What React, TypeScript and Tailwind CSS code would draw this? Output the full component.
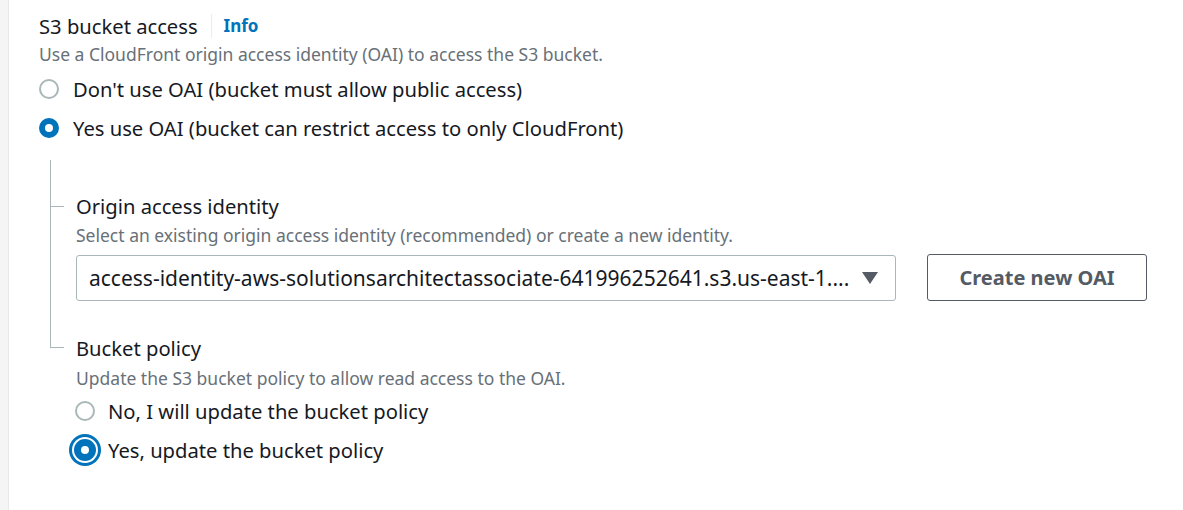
import React from "react";

const font = { fontFamily: '"Noto Sans", "Open Sans", Arial, sans-serif' };

function Radio({ checked, focused }: { checked?: boolean; focused?: boolean }) {
  if (focused) {
    return (
      <span className="flex h-[22px] w-[22px] shrink-0 items-center justify-center rounded-full border-[7px] border-[#0073bb] bg-white ring-[3px] ring-[#0073bb] ring-offset-2 ring-offset-white" />
    );
  }
  if (checked) {
    return <span className="block h-[20px] w-[20px] shrink-0 rounded-full border-[6px] border-[#0073bb] bg-white" />;
  }
  return <span className="block h-[20px] w-[20px] shrink-0 rounded-full border-2 border-[#aab7b8] bg-white" />;
}

export default function App() {
  return (
    <div className="flex h-[510px] w-[1183px] bg-white text-[#16191f]" style={font}>
      <div className="w-[9px] shrink-0 border-r border-[#e6e8ea] bg-[#f5f5f5]" />
      <div className="flex-1 pl-[30px] pt-[12px]">
        <div className="flex h-[28px] items-center">
          <span className="text-[20.2px] leading-[28px]">S3 bucket access</span>
          <span className="ml-[13px] h-[24px] w-px bg-[#eaeded]" />
          <span className="ml-[12px] text-[17px] font-bold leading-[28px] text-[#0073bb]">Info</span>
        </div>
        <div className="mt-[4px] text-[17.5px] leading-[20px] text-[#687078]">
          Use a CloudFront origin access identity (OAI) to access the S3 bucket.
        </div>
        <div className="mt-[11px] flex h-[28px] items-center gap-[14px]">
          <Radio />
          <span className="text-[20.2px] leading-[28px]">Don't use OAI (bucket must allow public access)</span>
        </div>
        <div className="mt-[11px] flex h-[28px] items-center gap-[14px]">
          <Radio checked />
          <span className="text-[20.2px] leading-[28px]">Yes use OAI (bucket can restrict access to only CloudFront)</span>
        </div>

        <div className="ml-[11px] mt-[18px] flex flex-col">
          <div className="flex">
            <div className="w-[26px] shrink-0 border-l border-[#aab7b8]">
              <div className="mt-[46px] h-px w-[13px] bg-[#aab7b8]" />
            </div>
            <div className="flex-1 pb-[33px] pt-[32px]">
              <div className="text-[20.2px] leading-[28px]">Origin access identity</div>
              <div className="mt-[5px] text-[17.5px] leading-[20px] text-[#687078]">
                Select an existing origin access identity (recommended) or create a new identity.
              </div>
              <div className="mt-[9px] flex items-center gap-[31px]">
                <div className="flex h-[46px] w-[820px] items-center justify-between rounded-[3px] border border-[#aab7b8] pl-[12px] pr-[17px]">
                  <span className="truncate text-[21px] leading-[28px]">
                    access-identity-aws-solutionsarchitectassociate-641996252641.s3.us-east-1....
                  </span>
                  <svg width="16" height="12" viewBox="0 0 16 12" className="ml-3 shrink-0">
                    <polygon points="0,0 16,0 8,12" fill="#545b64" />
                  </svg>
                </div>
                <button className="flex h-[47px] w-[220px] items-center justify-center rounded-[3px] border border-[#545b64] bg-white text-[20px] font-bold text-[#545b64]">
                  Create new OAI
                </button>
              </div>
            </div>
          </div>
          <div className="flex">
            <div className="w-[26px] shrink-0">
              <div className="h-[14px] w-[14px] border-b border-l border-[#aab7b8]" />
            </div>
            <div className="flex-1">
              <div className="text-[20.2px] leading-[28px]">Bucket policy</div>
              <div className="mt-[6px] text-[17.5px] leading-[20px] text-[#687078]">
                Update the S3 bucket policy to allow read access to the OAI.
              </div>
              <div className="-ml-px mt-[9px] flex h-[28px] items-center gap-[13px]">
                <Radio />
                <span className="text-[20.2px] leading-[28px]">No, I will update the bucket policy</span>
              </div>
              <div className="-ml-[2px] mt-[11px] flex h-[28px] items-center gap-[12px]">
                <Radio focused />
                <span className="text-[20.2px] leading-[28px]">Yes, update the bucket policy</span>
              </div>
            </div>
          </div>
        </div>
      </div>
    </div>
  );
}
